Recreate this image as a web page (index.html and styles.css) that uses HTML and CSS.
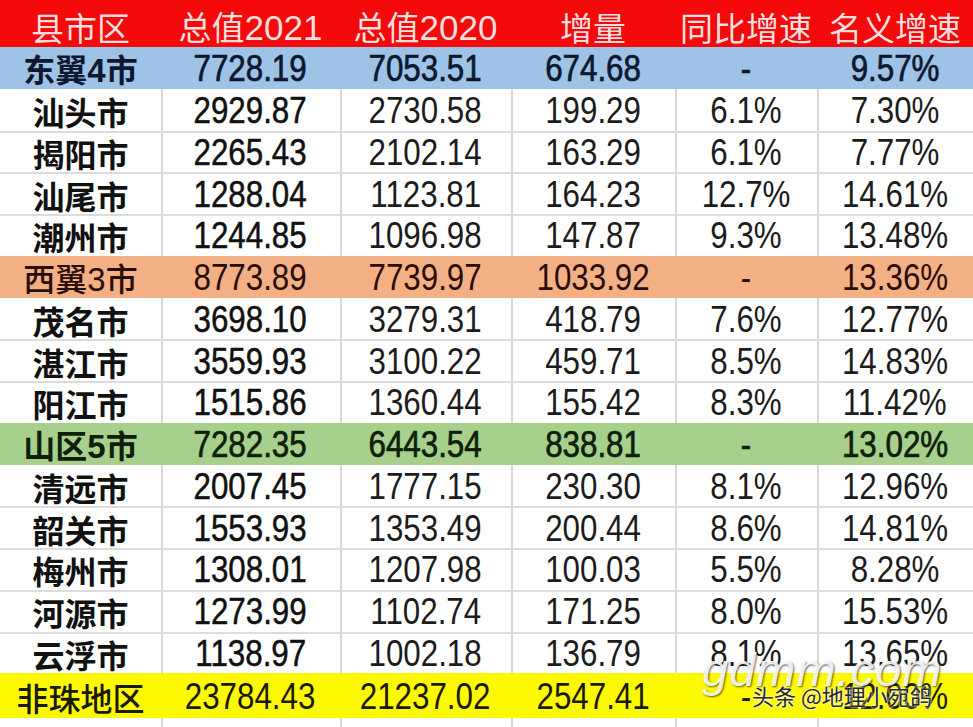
FILE: index.html
```html
<!DOCTYPE html>
<html lang="zh-CN">
<head>
<meta charset="utf-8">
<title>县市区 总值</title>
<link rel="stylesheet" href="styles.css">
</head>
<body>
<div class="sheet">
<table class="grid">
<colgroup>
<col class="c1"><col class="c2"><col class="c3"><col class="c4"><col class="c5"><col class="c6">
</colgroup>
<thead>
<tr class="head">
<th>县市区</th><th>总值<span class="hd">2021</span></th><th>总值<span class="hd">2020</span></th><th>增量</th><th>同比增速</th><th>名义增速</th>
</tr>
</thead>
<tbody>
<tr class="grp blue"><td class="name">东翼<span class="nd">4</span>市</td><td><span class="n">7728.19</span></td><td><span class="n">7053.51</span></td><td><span class="n">674.68</span></td><td><span class="n">-</span></td><td><span class="n">9.57%</span></td></tr>
<tr class="w"><td class="name">汕头市</td><td class="b"><span class="n">2929.87</span></td><td><span class="n">2730.58</span></td><td><span class="n">199.29</span></td><td><span class="n">6.1%</span></td><td><span class="n">7.30%</span></td></tr>
<tr class="w"><td class="name">揭阳市</td><td class="b"><span class="n">2265.43</span></td><td><span class="n">2102.14</span></td><td><span class="n">163.29</span></td><td><span class="n">6.1%</span></td><td><span class="n">7.77%</span></td></tr>
<tr class="w"><td class="name">汕尾市</td><td class="b"><span class="n">1288.04</span></td><td><span class="n">1123.81</span></td><td><span class="n">164.23</span></td><td><span class="n">12.7%</span></td><td><span class="n">14.61%</span></td></tr>
<tr class="w"><td class="name">潮州市</td><td class="b"><span class="n">1244.85</span></td><td><span class="n">1096.98</span></td><td><span class="n">147.87</span></td><td><span class="n">9.3%</span></td><td><span class="n">13.48%</span></td></tr>
<tr class="grp orange"><td class="name">西翼<span class="nd">3</span>市</td><td><span class="n">8773.89</span></td><td><span class="n">7739.97</span></td><td><span class="n">1033.92</span></td><td><span class="n">-</span></td><td><span class="n">13.36%</span></td></tr>
<tr class="w"><td class="name">茂名市</td><td class="b"><span class="n">3698.10</span></td><td><span class="n">3279.31</span></td><td><span class="n">418.79</span></td><td><span class="n">7.6%</span></td><td><span class="n">12.77%</span></td></tr>
<tr class="w"><td class="name">湛江市</td><td class="b"><span class="n">3559.93</span></td><td><span class="n">3100.22</span></td><td><span class="n">459.71</span></td><td><span class="n">8.5%</span></td><td><span class="n">14.83%</span></td></tr>
<tr class="w"><td class="name">阳江市</td><td class="b"><span class="n">1515.86</span></td><td><span class="n">1360.44</span></td><td><span class="n">155.42</span></td><td><span class="n">8.3%</span></td><td><span class="n">11.42%</span></td></tr>
<tr class="grp green"><td class="name">山区<span class="nd">5</span>市</td><td><span class="n">7282.35</span></td><td><span class="n">6443.54</span></td><td><span class="n">838.81</span></td><td><span class="n">-</span></td><td><span class="n">13.02%</span></td></tr>
<tr class="w"><td class="name">清远市</td><td class="b"><span class="n">2007.45</span></td><td><span class="n">1777.15</span></td><td><span class="n">230.30</span></td><td><span class="n">8.1%</span></td><td><span class="n">12.96%</span></td></tr>
<tr class="w"><td class="name">韶关市</td><td class="b"><span class="n">1553.93</span></td><td><span class="n">1353.49</span></td><td><span class="n">200.44</span></td><td><span class="n">8.6%</span></td><td><span class="n">14.81%</span></td></tr>
<tr class="w"><td class="name">梅州市</td><td class="b"><span class="n">1308.01</span></td><td><span class="n">1207.98</span></td><td><span class="n">100.03</span></td><td><span class="n">5.5%</span></td><td><span class="n">8.28%</span></td></tr>
<tr class="w"><td class="name">河源市</td><td class="b"><span class="n">1273.99</span></td><td><span class="n">1102.74</span></td><td><span class="n">171.25</span></td><td><span class="n">8.0%</span></td><td><span class="n">15.53%</span></td></tr>
<tr class="w"><td class="name">云浮市</td><td class="b"><span class="n">1138.97</span></td><td><span class="n">1002.18</span></td><td><span class="n">136.79</span></td><td><span class="n">8.1%</span></td><td><span class="n">13.65%</span></td></tr>
<tr class="grp yellow"><td class="name">非珠地区</td><td><span class="n">23784.43</span></td><td><span class="n">21237.02</span></td><td><span class="n">2547.41</span></td><td><span class="n">-</span></td><td><span class="n">12.00%</span></td></tr>
<tr class="w tail"><td></td><td></td><td></td><td></td><td></td><td></td></tr>
</tbody>
</table>
<div class="mark">
<div class="site">gdmm.com</div>
<div class="author">头条 @地理小宛鸽</div>
</div>
</div>
</body>
</html>
```

FILE: styles.css
```css
html, body {
  margin: 0;
  padding: 0;
  background: #ffffff;
  overflow: hidden;
}

.sheet {
  position: relative;
  width: 973px;
  height: 727px;
  overflow: hidden;
}

.grid {
  width: 973px;
  border-collapse: separate;
  border-spacing: 0;
  table-layout: fixed;
  font-family: "Liberation Sans", "Noto Sans CJK SC", sans-serif;
  color: #1c1c1c;
}

.c1 { width: 161px; }
.c2 { width: 179px; }
.c3 { width: 171px; }
.c4 { width: 164px; }
.c5 { width: 142px; }
.c6 { width: 156px; }

.head th {
  height: 47px;
  padding: 8px 0 0;
  box-sizing: border-box;
  background: #f40a0a;
  color: #f8dede;
  font-family: "Noto Sans CJK SC", sans-serif;
  font-size: 33px;
  font-weight: 400;
  line-height: 1;
  text-align: center;
  vertical-align: middle;
  white-space: nowrap;
}

.head .hd {
  font-family: "Liberation Sans", sans-serif;
  font-size: 35px;
  font-weight: 400;
}

td {
  height: 41.75px;
  padding: 3px 0 0;
  box-sizing: border-box;
  text-align: center;
  vertical-align: middle;
  line-height: 1;
  white-space: nowrap;
  font-weight: 400;
}

.name {
  font-family: "Noto Sans CJK SC", sans-serif;
  font-size: 32px;
  font-weight: 700;
  color: #111111;
}

.name .nd {
  font-family: "Liberation Sans", sans-serif;
  font-size: 33px;
}

.n {
  display: inline-block;
  font-size: 36px;
  transform: scaleX(0.87);
  font-family: "Liberation Sans", sans-serif;
}

.b .n {
  color: #111111;
  -webkit-text-stroke: 0.5px currentColor;
}

.blue .n,
.green .n {
  -webkit-text-stroke: 0.7px currentColor;
}

.w td + td {
  box-shadow: inset 2px 0 0 #d9d9d9;
}

.w + .w td {
  box-shadow: inset 0 2px 0 #dcdcdc;
}

.w + .w td + td {
  box-shadow: inset 2px 0 0 #d9d9d9, inset 0 2px 0 #dcdcdc;
}

.tail td { height: 10px; }

.blue td { background: #9ec3e6; color: #0c1830; }
.orange td { background: #f3b085; color: #2a0d08; }
.green td { background: #a8d08d; color: #0f200a; }
.yellow td { background: #fdf900; color: #1a1a00; height: 45px; }
.yellow .name { font-weight: 500; }
.orange .name { font-weight: 500; }

.mark {
  position: absolute;
  left: 702px;
  top: 646px;
  width: 265px;
}

.site {
  font-family: "Liberation Sans", sans-serif;
  font-size: 47px;
  font-style: italic;
  letter-spacing: 1px;
  color: rgba(255, 255, 255, 0.88);
  text-shadow: 1px 1px 2px rgba(0, 0, 0, 0.6);
  line-height: 1;
}

.author {
  margin: -9px 0 0 50px;
  font-family: "Noto Sans CJK SC", sans-serif;
  font-size: 22px;
  color: #262626;
  text-shadow: 0 0 2px #ffffff, 0 0 3px #ffffff;
  line-height: 1;
}
```
